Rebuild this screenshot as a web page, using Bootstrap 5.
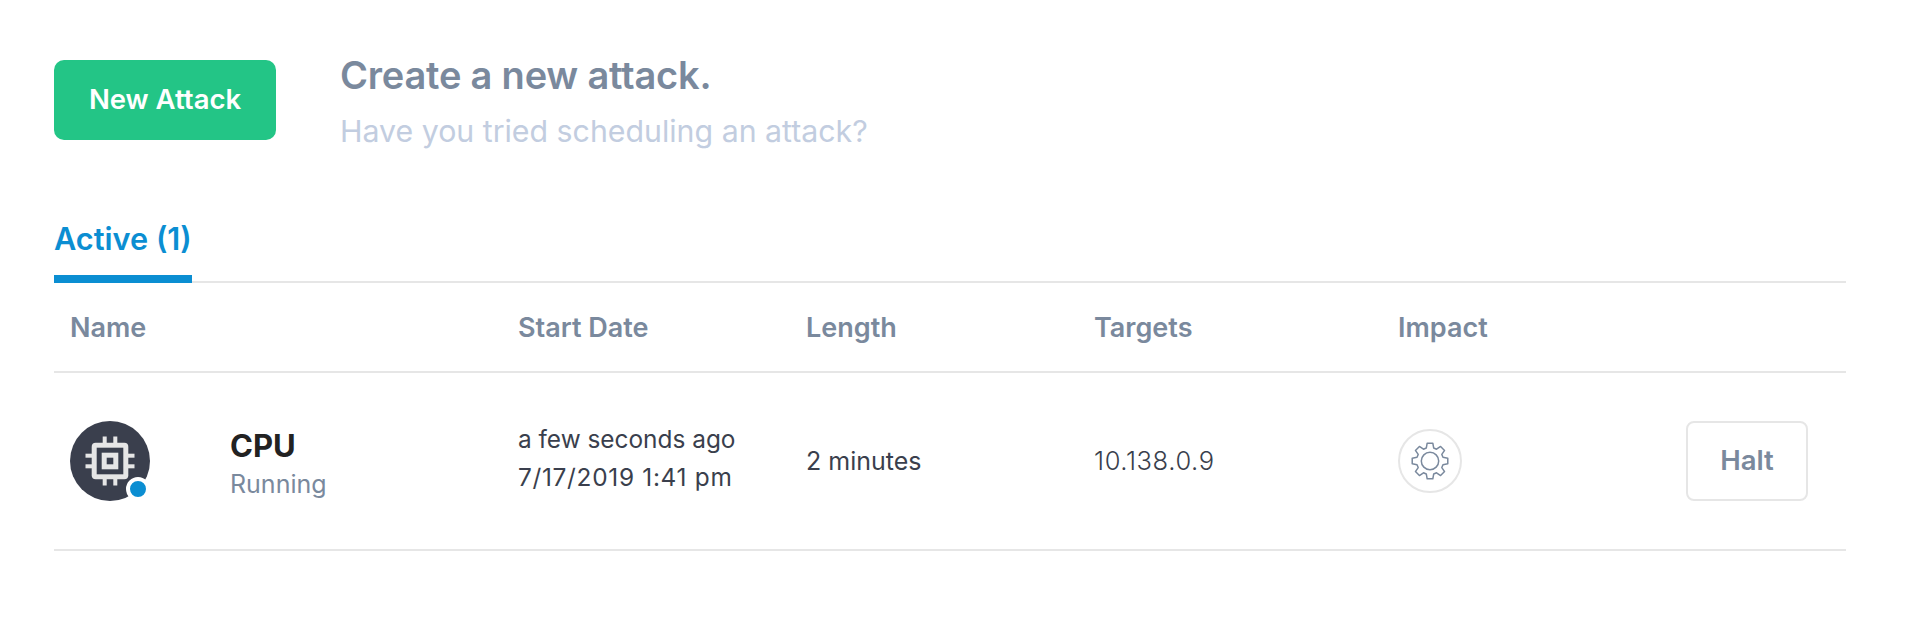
<!DOCTYPE html>
<html lang="en">
<head>
<meta charset="utf-8">
<title>Attacks</title>
<link href="https://cdn.jsdelivr.net/npm/bootstrap@5.3.0/dist/css/bootstrap.min.css" rel="stylesheet">
<style>
body { background:#fff; font-family:"Inter","Liberation Sans",sans-serif; color:#3a3f4d; }
.page-wrap { padding:60px 62px 0 54px; }
.new-btn { width:222px; height:80px; background:#23c586; border:0; border-radius:10px; color:#fff; font-size:27.5px; font-weight:600; padding:0; }
.new-btn:hover { background:#23c586; color:#fff; }
.intro { padding-left:64px; }
.intro-title { font-size:38px; font-weight:600; color:#7a899d; line-height:42px; margin:-6px 0 17px; letter-spacing:-.2px; }
.intro-sub { font-size:30.3px; font-weight:400; color:#c2cde0; line-height:36px; margin:0; }
.tab-bar { margin-top:66px; border-bottom:2px solid #e6e6e6; }
.tab-link { display:inline-block; font-size:30.7px; font-weight:600; color:#0b8ed2; line-height:36px; padding:6px 0 18px; border-bottom:8px solid #0b8ed2; margin-bottom:-2px; }
.tab-bar a:hover { color:#0b8ed2; }
.atk-table { margin:0; table-layout:fixed; width:1792px; }
.atk-table th { font-size:27px; font-weight:600; color:#7a899d; padding:27px 16px 25px; line-height:36px; border-bottom:2px solid #e6e6e6; }
.atk-table td { padding:40px 16px; height:178px; vertical-align:middle; border-bottom:2px solid #e6e6e6; font-size:25px; color:#3a3f4d; line-height:38px; }
.atk-table td.name-cell { padding-top:48px; }
.atk-table td.date-cell { padding-bottom:46px; font-size:24.4px; }
.date-line { letter-spacing:.7px; }
.atk-table td.target-cell { font-size:25.5px; font-weight:300; letter-spacing:.6px; }
.avatar { width:80px; height:80px; border-radius:50%; background:#3a3f4d; }
.avatar svg { display:block; }
.status-dot { position:absolute; right:0; bottom:0; width:24px; height:24px; background:#0b8ed2; border:4px solid #fff; border-radius:50%; }
.atk-name { font-size:31px; font-weight:700; color:#222; line-height:38px; }
.atk-state { font-size:25px; color:#7a899d; line-height:38px; }
.impact-ring { width:64px; height:64px; border:2px solid #e6e6e6; border-radius:50%; }
.halt-btn { width:122px; height:80px; background:#fff; border:2px solid #e6e6e6; border-radius:8px; color:#7a899d; font-size:27.5px; font-weight:600; padding:0; }
</style>
</head>
<body>
<div class="page-wrap">
  <div class="d-flex align-items-start">
    <button type="button" class="btn new-btn">New Attack</button>
    <div class="intro">
      <h1 class="intro-title">Create a new attack.</h1>
      <p class="intro-sub">Have you tried scheduling an attack?</p>
    </div>
  </div>

  <div class="tab-bar"><a href="#" class="tab-link text-decoration-none">Active (1)</a></div>

  <table class="table atk-table">
    <colgroup><col style="width:160px"><col style="width:288px"><col style="width:288px"><col style="width:288px"><col style="width:304px"><col style="width:288px"><col style="width:176px"></colgroup>
    <thead>
      <tr><th colspan="2">Name</th><th>Start Date</th><th>Length</th><th>Targets</th><th colspan="2">Impact</th></tr>
    </thead>
    <tbody>
      <tr>
        <td>
          <div class="avatar position-relative">
            <svg width="80" height="80" viewBox="0 0 80 80" aria-hidden="true">
              <rect x="15.5" y="32.7" width="7" height="4" fill="#e6e6e6"/><rect x="15.5" y="43.3" width="7" height="4" fill="#e6e6e6"/>
              <rect x="57.5" y="32.7" width="7" height="4" fill="#e6e6e6"/><rect x="57.5" y="43.3" width="7" height="4" fill="#e6e6e6"/>
              <rect x="32.7" y="15.5" width="4" height="7" fill="#e6e6e6"/><rect x="43.3" y="15.5" width="4" height="7" fill="#e6e6e6"/>
              <rect x="32.7" y="57.5" width="4" height="7" fill="#e6e6e6"/><rect x="43.3" y="57.5" width="4" height="7" fill="#e6e6e6"/>
              <rect x="21.7" y="21.7" width="36.6" height="36.6" rx="4" fill="#e6e6e6"/>
              <rect x="26.7" y="26.7" width="26.6" height="26.6" fill="#3a3f4d"/>
              <rect x="31.7" y="31.7" width="16.6" height="16.6" fill="#e6e6e6"/>
              <rect x="36.7" y="36.7" width="6.6" height="6.6" fill="#3a3f4d"/>
            </svg>
            <span class="status-dot"></span>
          </div>
        </td>
        <td class="name-cell">
          <div class="atk-name">CPU</div>
          <div class="atk-state">Running</div>
        </td>
        <td class="date-cell">a few seconds ago<br><span class="date-line">7/17/2019 1:41 pm</span></td>
        <td>2 minutes</td>
        <td class="target-cell">10.138.0.9</td>
        <td>
          <div class="impact-ring d-flex align-items-center justify-content-center">
            <svg width="40" height="40" viewBox="-20 -20 40 40" aria-hidden="true" fill="none" stroke="#7a899d" stroke-width="1.5" stroke-linejoin="round">
              <path d="M17.78 2.82 12.98 3.72 11.81 6.55 14.56 10.58 10.58 14.56 6.55 11.81 3.72 12.98 2.82 17.78-2.82 17.78-3.72 12.98-6.55 11.81-10.58 14.56-14.56 10.58-11.81 6.55-12.98 3.72-17.78 2.82-17.78-2.82-12.98-3.72-11.81-6.55-14.56-10.58-10.58-14.56-6.55-11.81-3.72-12.98-2.82-17.78 2.82-17.78 3.72-12.98 6.55-11.81 10.58-14.56 14.56-10.58 11.81-6.55 12.98-3.72 17.78-2.82Z"/>
              <circle r="8.7"/>
            </svg>
          </div>
        </td>
        <td><button type="button" class="btn halt-btn">Halt</button></td>
      </tr>
    </tbody>
  </table>
</div>
</body>
</html>
